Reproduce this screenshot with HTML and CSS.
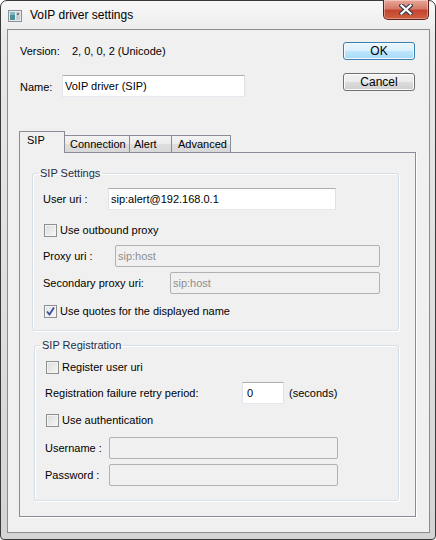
FILE: index.html
```html
<!DOCTYPE html>
<html lang="en">

<head>
    <meta charset="UTF-8" />
    <title>VoIP driver settings</title>
    <link rel="stylesheet" href="styles.css">
</head>

<body>
    <div class="window">
        <div class="titlebar">
            <span class="app-icon">
                <svg width="14" height="12" viewBox="0 0 14 12">
                    <rect x="0.5" y="0.5" width="13" height="11" fill="#e8eaec" stroke="#8a9096" />
                    <rect x="2" y="2" width="5" height="8" fill="#4d8f9a" />
                    <rect x="2" y="2" width="5" height="3" fill="#7fb9c0" />
                    <rect x="8" y="2" width="4" height="8" fill="#c9ced3" />
                    <rect x="9" y="3" width="2" height="2" fill="#6f7a84" />
                </svg>
            </span>
            <span class="title">VoIP driver settings</span>
            <span class="close-btn">
                <svg width="14" height="11" viewBox="0 0 14 11">
                    <path d="M2.5 1.5 L11.5 9.5 M11.5 1.5 L2.5 9.5" stroke="#3b3f4a" stroke-width="4.4" stroke-linecap="square" />
                    <path d="M2.5 1.5 L11.5 9.5 M11.5 1.5 L2.5 9.5" stroke="#ffffff" stroke-width="2.2" stroke-linecap="square" />
                </svg>
            </span>
        </div>

        <div class="client">
            <div class="top">
                <div class="info">
                    <div class="info-row">
                        <span class="info-label">Version:</span>
                        <span>2, 0, 0, 2 (Unicode)</span>
                    </div>
                    <div class="info-row name-row">
                        <span class="name-label">Name:</span>
                        <input class="textbox name-input" type="text" value="VoIP driver (SIP)">
                    </div>
                </div>
                <div class="buttons">
                    <button class="btn btn-default">OK</button>
                    <button class="btn">Cancel</button>
                </div>
            </div>

            <div class="tabs">
                <div class="tab-strip">
                    <span class="tab tab-active">SIP</span>
                    <span class="tab tab-connection">Connection</span>
                    <span class="tab tab-alert">Alert</span>
                    <span class="tab tab-advanced">Advanced</span>
                </div>

                <div class="tab-panel">
                    <fieldset class="group group-settings">
                        <legend>SIP Settings</legend>

                        <div class="row row-user">
                            <span class="lbl lbl-user">User uri :</span>
                            <input class="textbox w-user" type="text" value="sip:alert@192.168.0.1">
                        </div>

                        <div class="check-row row-outbound">
                            <span class="check"></span>
                            <span>Use outbound proxy</span>
                        </div>

                        <div class="row row-proxy">
                            <span class="lbl lbl-proxy">Proxy uri :</span>
                            <input class="textbox disabled w-proxy" type="text" value="sip:host" disabled>
                        </div>

                        <div class="row row-secondary">
                            <span class="lbl lbl-secondary">Secondary proxy uri:</span>
                            <input class="textbox disabled w-secondary" type="text" value="sip:host" disabled>
                        </div>

                        <div class="check-row row-quotes">
                            <span class="check checked">
                                <svg width="11" height="11" viewBox="0 0 11 11">
                                    <path d="M2 5.5 L4.5 8.5 L9 1.5" fill="none" stroke="#3d4f8a" stroke-width="1.8" />
                                </svg>
                            </span>
                            <span>Use quotes for the displayed name</span>
                        </div>
                    </fieldset>

                    <fieldset class="group group-registration">
                        <legend>SIP Registration</legend>

                        <div class="check-row row-register">
                            <span class="check"></span>
                            <span>Register user uri</span>
                        </div>

                        <div class="row row-retry">
                            <span class="lbl lbl-retry">Registration failure retry period:</span>
                            <input class="textbox w-retry" type="text" value="0">
                            <span class="unit">(seconds)</span>
                        </div>

                        <div class="check-row row-auth">
                            <span class="check"></span>
                            <span>Use authentication</span>
                        </div>

                        <div class="row row-username">
                            <span class="lbl lbl-login">Username :</span>
                            <input class="textbox disabled w-login" type="text" disabled>
                        </div>

                        <div class="row row-password">
                            <span class="lbl lbl-login">Password :</span>
                            <input class="textbox disabled w-login" type="password" disabled>
                        </div>
                    </fieldset>
                </div>
            </div>
        </div>
    </div>
</body>
</html>
```

FILE: styles.css
```css
* {
    box-sizing: border-box;
}

body {
    margin: 0;
    background: #fff;
    font-family: "Liberation Sans", Arial, sans-serif;
    font-size: 11px;
    line-height: 13px;
    color: #000;
}

/* window frame */

.window {
    width: 436px;
    height: 540px;
    display: flex;
    flex-direction: column;
    padding: 0 5px 6px 6px;
    border: 1px solid #3a3a3a;
    border-radius: 7px 7px 4px 4px;
    background: linear-gradient(#f8f8f8, #e8e8e8 40px, #dedede 60%, #d4d4d4);
}

.titlebar {
    height: 28px;
    display: flex;
    align-items: center;
    padding-left: 1px;
}

.app-icon {
    display: flex;
    margin-top: 1px;
}

.title {
    margin-left: 8px;
    font-size: 12px;
    color: #000;
}

.close-btn {
    align-self: flex-start;
    margin: -1px 1px 0 auto;
    width: 46px;
    height: 20px;
    display: flex;
    align-items: center;
    justify-content: center;
    border: 1px solid #5b2118;
    border-top: none;
    border-radius: 0 0 5px 5px;
    background: linear-gradient(#e9a899, #d67b69 45%, #c4452f 55%, #d05f40);
    box-shadow: inset 0 0 0 1px rgba(255, 255, 255, 0.35);
}

.client {
    flex: 1;
    display: flex;
    flex-direction: column;
    border: 1px solid #8c8c8c;
    background: #f0f0f0;
}

/* top section */

.top {
    display: flex;
    justify-content: space-between;
    padding: 12px 14px 0 12px;
}

.info-row {
    display: flex;
    align-items: center;
    height: 18px;
}

.info-label {
    width: 52px;
}

.name-row {
    height: 23px;
    margin-top: 14px;
}

.name-label {
    width: 42px;
    margin-top: 4px;
}

.name-input {
    width: 183px;
    height: 23px;
    padding-bottom: 3px;
}

.buttons {
    display: flex;
    flex-direction: column;
    gap: 13px;
}

.btn {
    width: 72px;
    height: 18px;
    padding: 0;
    font-family: inherit;
    font-size: 12px;
    color: #000;
    border: 1px solid #707070;
    border-radius: 3px;
    background: linear-gradient(#f2f2f2, #ebebeb 50%, #dddddd 50%, #cfcfcf);
    box-shadow: inset 0 0 0 1px #fcfcfc;
}

.btn-default {
    border-color: #3c7fb1;
    background: linear-gradient(#eaf6fd, #d9f0fc 50%, #bee6fd 50%, #a7d9f5);
    box-shadow: inset 0 0 0 1px #f4fbfe;
}

/* tabs */

.tabs {
    margin: 34px 0 0 11px;
    width: 397px;
}

.tab-strip {
    display: flex;
    align-items: flex-end;
    height: 21px;
}

.tab {
    height: 17px;
    padding-left: 5px;
    margin-left: -1px;
    display: flex;
    align-items: center;
    border: 1px solid #898c95;
    border-bottom: none;
    background: linear-gradient(#f3f3f3, #ebebeb 50%, #dedede 50%, #d8d8d8);
}

.tab-active {
    position: relative;
    z-index: 1;
    width: 46px;
    height: 22px;
    margin: 0 0 -1px 0;
    padding: 0 0 4px 7px;
    background: #f0f0f0;
}

.tab-connection { width: 66px; }
.tab-alert { width: 43px; padding-left: 4px; }
.tab-advanced { width: 60px; padding-left: 6px; }

.tab-panel {
    height: 365px;
    padding: 14px 0 0 12px;
    border: 1px solid #898c95;
    box-shadow: 1px 1px 0 #ffffff;
}

/* group boxes */

.group {
    margin: 0;
    min-width: 0;
    padding: 0 10px 12px 10px;
    width: 367px;
    border: 1px solid #d5dfe5;
    border-radius: 3px;
    box-shadow: inset 1px 1px 0 #ffffff, 1px 1px 0 #ffffff;
}

.group legend {
    padding: 0 2px;
    margin-left: -5px;
    line-height: 13px;
    color: #1e2d4a;
}

.group-registration {
    width: 365px;
    margin: 8px 0 0 2px;
    padding-bottom: 14px;
}

.row {
    display: flex;
    align-items: center;
    height: 22px;
}

.lbl {
    flex: none;
}

.lbl-user { width: 65px; }
.lbl-proxy { width: 72px; }
.lbl-secondary { width: 127px; }
.lbl-retry { width: 197px; }
.lbl-login { width: 64px; }

.row-user { margin-top: 8px; }
.row-proxy { margin-top: 8px; }
.row-secondary { margin-top: 5px; }
.row-retry { margin-top: 8px; }
.row-username { margin-top: 10px; }
.row-password { margin-top: 5px; }

.check-row {
    display: flex;
    align-items: center;
    height: 13px;
}

.row-outbound { margin-top: 14px; }
.row-quotes { margin-top: 11px; }
.row-register { margin-top: 9px; }
.row-auth { margin-top: 10px; }

.check {
    width: 13px;
    height: 13px;
    margin: 0 3px 0 1px;
    display: flex;
    align-items: center;
    justify-content: center;
    border: 1px solid #8e8f8f;
    background: linear-gradient(135deg, #dcdcdc, #f6f6f6);
    box-shadow: inset 0 0 0 1px #f4f4f4;
}

.check.checked {
    background: linear-gradient(135deg, #dce4f0, #f6f8fb);
}

/* text boxes */

.textbox {
    height: 22px;
    margin: 0;
    padding: 0 2px;
    font-family: inherit;
    font-size: 11px;
    color: #000;
    background: #fff;
    border: 1px solid;
    border-color: #abadb3 #dbdfe6 #e3e9ef #e2e3ea;
    outline: none;
}

.textbox.disabled {
    color: #8d8d8d;
    background: #f0f0f0;
    border: 1px solid #adb2b5;
    border-radius: 2px;
}

.w-user { width: 228px; }
.w-proxy { width: 265px; }
.w-secondary { width: 210px; }
.w-retry { width: 42px; padding-left: 4px; }
.w-login { width: 229px; }

.unit {
    margin-left: 5px;
}
```
